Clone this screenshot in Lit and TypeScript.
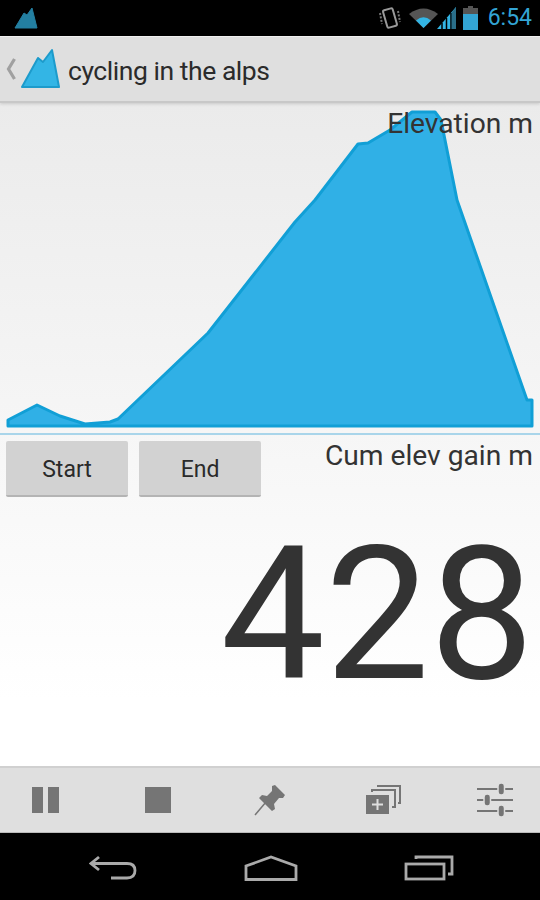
import { LitElement, html, css } from "lit";
import { customElement } from "lit/decorators.js";

const chartPts = "8,420 37,405 60,416 85,424 110,422 118,419 208,333 295,222 315,200 358,144 368,143 390,130 412,112 435,112 441,120 457,200 527,400 532,400 532,426 8,426";

@customElement("app-root")
export class AppRoot extends LitElement {
  static styles = css`
    :host { display: block; width: 540px; height: 900px; overflow: hidden; font-family: Roboto, "Liberation Sans", sans-serif; color: #333; }
    .page { display: flex; flex-direction: column; height: 900px; }
    .status { height: 36px; flex: none; background: #000; display: flex; align-items: center; padding: 0 8px 0 14px; }
    .status .spacer { flex: 1; }
    .status svg { display: block; }
    .clock { color: #33a5d5; font-size: 23px; margin-left: 10px; line-height: 36px; }
    .notif { opacity: .7; }
    .rot { margin-right: 8px; }
    .sig { margin-right: 7px; margin-left: -1px; }
    .actionbar { height: 67px; flex: none; background: #dfdfdf; border-top: 1px solid #f0f0f0; box-sizing: border-box; border-bottom: 2px solid #c8c8c8; display: flex; align-items: center; padding: 0 0 0 6px; position: relative; z-index: 1; box-shadow: 0 1px 3px rgba(0,0,0,.15); }
    .chev { margin-right: 4px; }
    .title { font-size: 26.5px; letter-spacing: -0.45px; color: #2b2b2b; margin-left: 8px; padding-top: 2px; }
    .content { flex: 1; min-height: 0; display: flex; flex-direction: column; background: linear-gradient(#ebebeb, #fff 90%); }
    .chart { height: 330px; flex: none; position: relative; border-bottom: 2px solid #a9d5ea; }
    .chart svg { display: block; }
    .chart .lbl { position: absolute; right: 7px; top: 3px; }
    .lbl { font-size: 28.2px; line-height: 36px; color: #333; }
    .row { display: flex; align-items: flex-start; padding: 6px 7px 0 6px; }
    .btn { width: 122px; height: 56px; box-sizing: border-box; margin-right: 11px; background: #d2d2d2; border: none; border-bottom: 2px solid #b4b4b4; border-radius: 2px; font: 23px Roboto, sans-serif; color: #2a2a2a; padding: 2px 0 0; }
    .row .lbl { margin-left: auto; margin-top: -3px; }
    .big { font-size: 186px; line-height: 226px; text-align: right; padding-right: 6px; margin-top: 4px; color: #333; }
    .tools { height: 67px; flex: none; box-sizing: border-box; background: #dfdfdf; border-top: 2px solid #d0d0d0; border-bottom: 1px solid #bbb; display: flex; align-items: center; justify-content: space-between; padding: 0 27px; }
    .tool { width: 36px; display: flex; justify-content: center; }
    .nav { height: 67px; flex: none; background: #000; display: flex; align-items: center; justify-content: center; padding: 2px 0 0 1px; box-sizing: border-box; }
    .nav div { width: 158px; display: flex; justify-content: center; }
  `;

  render() {
    return html`
      <div class="page">
        <div class="status">
          <svg class="notif" width="24" height="24" viewBox="0 0 24 24"><path d="M1 22 L10 7 L13 9 L18 2 L23 22 Z" fill="#33b5e5" stroke="#33b5e5" stroke-linejoin="round"/></svg>
          <span class="spacer"></span>
          <svg class="rot" width="22" height="26" viewBox="0 0 22 26"><rect x="6" y="4" width="10" height="18" rx="1.5" transform="rotate(-16 11 13)" fill="none" stroke="#999" stroke-width="2"/><path d="M1 8 L3 19 M19 6 L21 17" stroke="#777" stroke-width="2" stroke-dasharray="2 1.5"/></svg>
          <svg width="29" height="20" viewBox="0 0 29 20"><path d="M0 6 Q14.500 -5 29 6 L14.500 20 Z" fill="#555"/><path d="M7 12.500 Q14.500 6 22 12.500 L14.500 20 Z" fill="#33b5e5"/></svg>
          <svg class="sig" width="19" height="22" viewBox="0 0 19 22"><path d="M0 22 L19 0 V22 Z" fill="#33b5e5"/><path d="M5 22 V16 M9.500 22 V11 M14 22 V6" stroke="#000" stroke-width="1.500"/><path d="M14.800 22 V5.500 L19 0 V22 Z" fill="#2a6f8a"/></svg>
          <svg width="15" height="24" viewBox="0 0 15 24"><path d="M5 0 H10 V2 H15 V24 H0 V2 H5 Z" fill="#33a5d5"/><path d="M5 0 H10 V2 H15 V8 H0 V2 H5 Z" fill="#555"/></svg>
          <span class="clock">6:54</span>
        </div>
        <div class="actionbar">
          <svg class="chev" width="10" height="24" viewBox="0 0 10 24"><path d="M8.500 2 L2.500 12 L8.500 22" fill="none" stroke="#a0a0a0" stroke-width="3.200"/></svg>
          <svg width="40" height="42" viewBox="0 0 40 42"><path d="M2 39 L18 10 L23 14 L32 2 L39 39 Z" fill="#33b5e5" stroke="#1d9bcb" stroke-width="2" stroke-linejoin="round"/></svg>
          <span class="title">cycling in the alps</span>
        </div>
        <div class="content">
          <div class="chart">
            <svg width="540" height="330" viewBox="0 103 540 330">
              <polygon points="${chartPts}" fill="#30b0e6" stroke="#119fd6" stroke-width="3" stroke-linejoin="round"></polygon>
            </svg>
            <span class="lbl">Elevation m</span>
          </div>
          <div class="row">
            <button class="btn">Start</button>
            <button class="btn">End</button>
            <span class="lbl">Cum elev gain m</span>
          </div>
          <div class="big">428</div>
        </div>
        <div class="tools">
          <div class="tool"><svg width="30" height="28" viewBox="0 0 30 28"><path d="M2 1 H13 V27 H2 Z M18 1 H29 V27 H18 Z" fill="#757575"/></svg></div>
          <div class="tool"><svg width="30" height="28" viewBox="0 0 30 28"><rect x="2" y="1" width="26" height="26" fill="#757575"/></svg></div>
          <div class="tool"><svg width="32" height="32" viewBox="0 0 32 32"><path d="M1 31 L12 18" stroke="#757575" stroke-width="1.500"/><path d="M18 2 L21 1 L31 11 L29 14 L25 14 L20 20 L21 25 L18 27 L5 14 L8 11 L13 12 L18 7 Z" fill="#757575"/></svg></div>
          <div class="tool"><svg width="36" height="30" viewBox="0 0 36 30"><path d="M1 10 H24 V29 H1 Z" fill="#757575"/><path d="M7 7 V5 H30 V22 H27 M13 2 V1 H35 V18 H33" fill="none" stroke="#757575" stroke-width="2"/><path d="M12.500 14 V25 M7 19.500 H18" stroke="#dfdfdf" stroke-width="2"/></svg></div>
          <div class="tool"><svg width="36" height="36" viewBox="0 0 36 36"><path d="M0 7 H36 M0 18 H36 M0 29 H36" stroke="#757575" stroke-width="2"/><g fill="#757575" stroke="#dfdfdf" stroke-width="1.500"><rect x="21" y="1" width="6.500" height="12" rx="3"/><rect x="7" y="12" width="6.500" height="12" rx="3"/><rect x="21" y="23" width="6.500" height="12" rx="3"/></g></svg></div>
        </div>
        <div class="nav">
          <div><svg width="48" height="26" viewBox="0 0 48 26"><path d="M10 2 L2 8.500 L10 15 M2 8.500 H38 Q46 8.500 46 15.500 Q46 23 38 23 H22" fill="none" stroke="#aaa" stroke-width="2.800"/></svg></div>
          <div><svg width="54" height="26" viewBox="0 0 54 26"><path d="M2 24.500 V11 L27 2 L52 11 V24.500 Z" fill="none" stroke="#aaa" stroke-width="2.800"/></svg></div>
          <div><svg width="50" height="26" viewBox="0 0 50 26"><rect x="2" y="9" width="38" height="15" fill="none" stroke="#aaa" stroke-width="2.800"/><path d="M12 4 V2 H48 V19 H44" fill="none" stroke="#aaa" stroke-width="2.800"/></svg></div>
        </div>
      </div>
    `;
  }
}
